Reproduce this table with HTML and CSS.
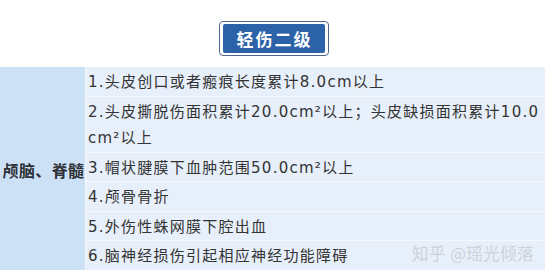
FILE: index.html
```html
<!DOCTYPE html>
<html lang="zh">
<head>
<meta charset="utf-8">
<link rel="stylesheet" href="styles.css">
</head>
<body>
<div class="page">
  <div class="title-wrap">
    <div class="title"><span class="title-inner">轻伤二级</span></div>
  </div>
  <div class="table">
    <div class="cat">颅脑、脊髓</div>
    <div class="item">1.头皮创口或者瘢痕长度累计8.0cm以上</div>
    <div class="item">2.头皮撕脱伤面积累计20.0cm²以上；头皮缺损面积累计10.0<br>cm²以上</div>
    <div class="item">3.帽状腱膜下血肿范围50.0cm²以上</div>
    <div class="item">4.颅骨骨折</div>
    <div class="item">5.外伤性蛛网膜下腔出血</div>
    <div class="item">6.脑神经损伤引起相应神经功能障碍</div>
  </div>
  <div class="watermark">知乎 @瑶光倾落</div>
</div>
</body>
</html>
```
FILE: styles.css
```css
html, body {
  margin: 0;
  padding: 0;
  background: #ffffff;
}
.page {
  position: relative;
  width: 545px;
  height: 270px;
  overflow: hidden;
  font-family: "DejaVu Sans", "Noto Sans CJK SC", sans-serif;
}
.title-wrap {
  display: flex;
  justify-content: center;
  align-items: flex-start;
  padding-top: 21px;
  padding-left: 2px;
  height: 67px;
  box-sizing: border-box;
}
.title {
  border: 1px solid #52668a;
  border-radius: 4px;
  padding: 2px 3px;
  height: 35px;
  box-sizing: border-box;
  background: #ffffff;
}
.title-inner {
  display: block;
  background: #2b62a8;
  border-radius: 2px;
  color: #ffffff;
  font-family: "Noto Sans CJK SC", sans-serif;
  font-weight: 700;
  font-size: 17px;
  letter-spacing: 2px;
  line-height: 29px;
  padding: 0 12px 0 14px;
}
.table {
  display: grid;
  grid-template-columns: 85px 1fr;
  grid-template-rows: repeat(6, auto);
  column-gap: 1px;
  row-gap: 1px;
  background: #f4f8fd;
  width: 560px;
}
.cat {
  grid-row: 1 / span 6;
  grid-column: 1;
  background: #cde1f6;
  display: flex;
  align-items: center;
  justify-content: center;
  padding-left: 2px;
  padding-top: 3px;
  font-family: "Noto Sans CJK SC", sans-serif;
  font-weight: 700;
  font-size: 16px;
  letter-spacing: 0.4px;
  color: #2e3238;
  white-space: nowrap;
}
.item {
  grid-column: 2;
  background: #e7effa;
  padding: 2px 0 0 2px;
  font-size: 15px;
  letter-spacing: 1.25px;
  line-height: 26.5px;
  color: #333333;
  white-space: nowrap;
}
.watermark {
  position: absolute;
  left: 412px;
  top: 241px;
  font-family: "Noto Sans CJK SC", sans-serif;
  font-size: 16.5px;
  letter-spacing: 0.5px;
  color: rgba(200, 206, 214, 0.9);
}
```
